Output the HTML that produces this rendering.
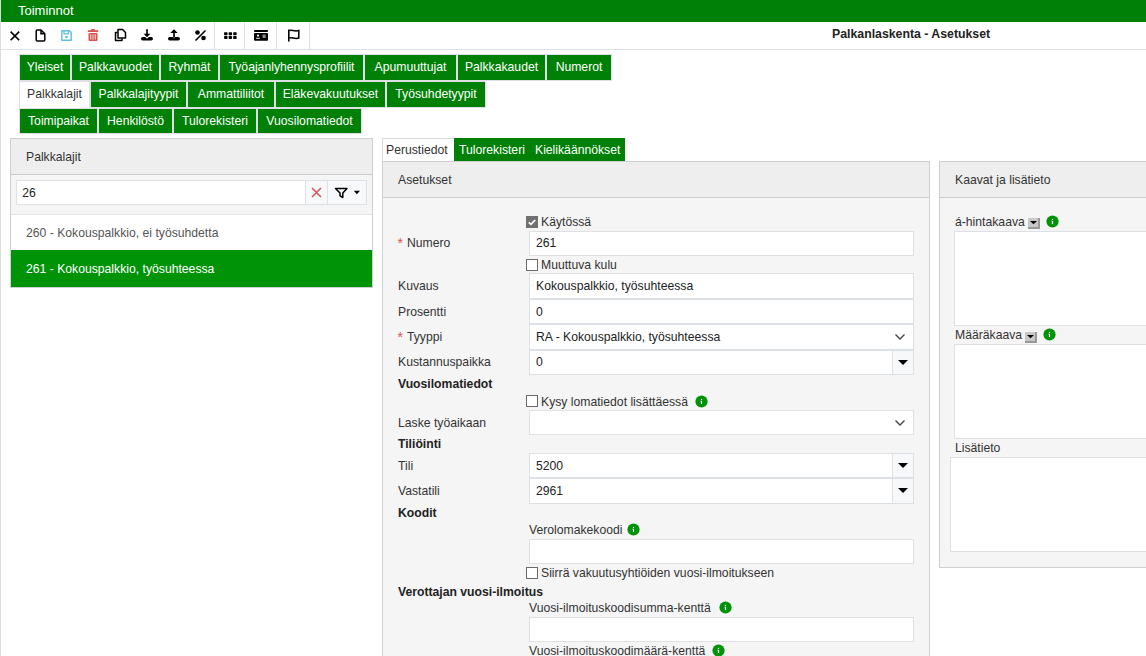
<!DOCTYPE html>
<html><head><meta charset="utf-8"><style>
html,body{margin:0;padding:0;}
body{width:1146px;height:656px;overflow:hidden;position:relative;background:#fff;font-family:"Liberation Sans",sans-serif;}
body>div{position:absolute;box-sizing:content-box;}
.t{position:absolute;line-height:1;white-space:nowrap;}
</style></head><body>
<div style="left:0px;top:0px;width:1px;height:656px;background:#dcdcdc"></div>
<div style="left:1px;top:0px;width:1145px;height:22px;background:#008006"></div>
<div class="t" style="left:18px;top:4.00px;font-size:13px;color:#fff;">Toiminnot</div>
<div style="left:1px;top:49px;width:1145px;height:1px;background:#dde0e4"></div>
<div style="left:214px;top:22px;width:1px;height:27px;background:#dde0e4"></div>
<div style="left:244px;top:22px;width:1px;height:27px;background:#dde0e4"></div>
<div style="left:276px;top:22px;width:1px;height:27px;background:#dde0e4"></div>
<div style="left:309px;top:22px;width:1px;height:27px;background:#dde0e4"></div>
<div class="t" style="left:832px;top:28.09px;font-size:12.3px;color:#222;font-weight:700;">Palkanlaskenta - Asetukset</div>
<svg style="position:absolute;left:9px;top:30px" width="12" height="12" viewBox="0 0 12 12"><path d="M1.6 1.6 L10.2 10.2 M10.2 1.6 L1.6 10.2" stroke="#000" stroke-width="1.6" fill="none"/></svg>
<svg style="position:absolute;left:35px;top:29px" width="11" height="13" viewBox="0 0 11 13"><path d="M1.2 2 Q1.2 1 2.2 1 H6 L9.8 4.8 V11 Q9.8 12 8.8 12 H2.2 Q1.2 12 1.2 11 Z" stroke="#000" stroke-width="1.5" fill="none" stroke-linejoin="round"/><path d="M6 1.2 V4.8 H9.6" stroke="#000" stroke-width="1.5" fill="none"/></svg>
<svg style="position:absolute;left:60px;top:29px" width="13" height="13" viewBox="0 0 13 13"><path d="M1.8 1.8 H9.5 L11.2 3.5 V11.2 H1.8 Z" stroke="#5bc0de" stroke-width="1.4" fill="none" stroke-linejoin="round"/><path d="M4 2 V4.8 H8.5 V2" stroke="#5bc0de" stroke-width="1.2" fill="none"/><circle cx="6.5" cy="8" r="1.3" fill="#5bc0de"/></svg>
<svg style="position:absolute;left:87px;top:28px" width="12" height="14" viewBox="0 0 12 14"><rect x="0.8" y="2.2" width="10.4" height="1.8" rx="0.5" fill="#d9534f"/><rect x="4.2" y="1" width="3.6" height="2" rx="0.5" fill="#d9534f"/><rect x="1.5" y="5" width="9" height="8" rx="1" fill="#d9534f"/><rect x="3.4" y="6.3" width="0.8" height="5.3" fill="#fff"/><rect x="5.6" y="6.3" width="0.8" height="5.3" fill="#fff"/><rect x="7.8" y="6.3" width="0.8" height="5.3" fill="#fff"/></svg>
<svg style="position:absolute;left:113px;top:28px" width="14" height="14" viewBox="0 0 14 14"><path d="M4.5 4.5 H2.5 V12.5 H9 V10.5" stroke="#000" stroke-width="1.5" fill="none" stroke-linejoin="round"/><path d="M5 1.5 H9.5 L12.5 4.5 V10 H5 Z" stroke="#000" stroke-width="1.5" fill="none" stroke-linejoin="round"/></svg>
<svg style="position:absolute;left:140px;top:28px" width="14" height="14" viewBox="0 0 14 14"><path d="M7 1.3 V7" stroke="#000" stroke-width="1.7"/><path d="M3.6 5.8 L7 9.2 L10.4 5.8 Z" fill="#000"/><path d="M2.8 9 H5.2 L7 10.8 L8.8 9 H11.2 A1.8 1.8 0 0 1 11.2 12.6 H2.8 A1.8 1.8 0 0 1 2.8 9 Z" fill="#000"/></svg>
<svg style="position:absolute;left:167px;top:28px" width="14" height="14" viewBox="0 0 14 14"><path d="M7 4 V9.8" stroke="#000" stroke-width="1.7"/><path d="M3.3 5 L7 1.2 L10.7 5 Z" fill="#000"/><path d="M2.8 9 H5.6 L7 10.4 L8.4 9 H11.2 A1.8 1.8 0 0 1 11.2 12.6 H2.8 A1.8 1.8 0 0 1 2.8 9 Z" fill="#000"/></svg>
<svg style="position:absolute;left:194px;top:29px" width="14" height="13" viewBox="0 0 14 13"><circle cx="3.5" cy="3.5" r="2.3" fill="#000"/><circle cx="9.5" cy="9" r="2.3" fill="#000"/><path d="M1.5 11.5 L11.5 1.5" stroke="#000" stroke-width="1.6"/></svg>
<svg style="position:absolute;left:224px;top:32px" width="14" height="8" viewBox="0 0 14 8"><rect x="0.10" y="0.20" width="3.4" height="3.0" rx="0.6" fill="#000"/><rect x="0.10" y="3.95" width="3.4" height="3.0" rx="0.6" fill="#000"/><rect x="4.65" y="0.20" width="3.4" height="3.0" rx="0.6" fill="#000"/><rect x="4.65" y="3.95" width="3.4" height="3.0" rx="0.6" fill="#000"/><rect x="9.20" y="0.20" width="3.4" height="3.0" rx="0.6" fill="#000"/><rect x="9.20" y="3.95" width="3.4" height="3.0" rx="0.6" fill="#000"/></svg>
<svg style="position:absolute;left:253px;top:29px" width="16" height="13" viewBox="0 0 16 13"><rect x="1" y="1" width="14" height="2" rx="0.8" fill="#000"/><rect x="1" y="4" width="14" height="7.8" rx="1" fill="#000"/><circle cx="5" cy="6.6" r="1.1" fill="#fff"/><rect x="3" y="8.8" width="4" height="0.9" fill="#fff"/><rect x="9.5" y="5.5" width="3.2" height="3.5" fill="#888"/></svg>
<svg style="position:absolute;left:287px;top:28px" width="14" height="14" viewBox="0 0 14 14"><path d="M1.8 1.5 V13.5" stroke="#000" stroke-width="1.6"/><path d="M2.5 2.5 C5 1 7 4 11.8 2.5 V10 C7 11.5 5 8.5 2.5 10" stroke="#000" stroke-width="1.5" fill="none"/></svg>
<div style="left:19px;top:54px;width:50px;height:25px;border:1px solid #dfe0e6;background:#008006"></div>
<div class="t" style="left:20px;top:61.47px;width:50px;text-align:center;font-size:12.2px;color:#fff;">Yleiset</div>
<div style="left:71px;top:54px;width:87px;height:25px;border:1px solid #dfe0e6;background:#008006"></div>
<div class="t" style="left:72px;top:61.47px;width:87px;text-align:center;font-size:12.2px;color:#fff;">Palkkavuodet</div>
<div style="left:160px;top:54px;width:57px;height:25px;border:1px solid #dfe0e6;background:#008006"></div>
<div class="t" style="left:161px;top:61.47px;width:57px;text-align:center;font-size:12.2px;color:#fff;">Ryhmät</div>
<div style="left:219px;top:54px;width:143px;height:25px;border:1px solid #dfe0e6;background:#008006"></div>
<div class="t" style="left:220px;top:61.47px;width:143px;text-align:center;font-size:12.2px;color:#fff;">Työajanlyhennysprofiilit</div>
<div style="left:364px;top:54px;width:91px;height:25px;border:1px solid #dfe0e6;background:#008006"></div>
<div class="t" style="left:365px;top:61.47px;width:91px;text-align:center;font-size:12.2px;color:#fff;">Apumuuttujat</div>
<div style="left:457px;top:54px;width:87px;height:25px;border:1px solid #dfe0e6;background:#008006"></div>
<div class="t" style="left:458px;top:61.47px;width:87px;text-align:center;font-size:12.2px;color:#fff;">Palkkakaudet</div>
<div style="left:546px;top:54px;width:64px;height:25px;border:1px solid #dfe0e6;background:#008006"></div>
<div class="t" style="left:547px;top:61.47px;width:64px;text-align:center;font-size:12.2px;color:#fff;">Numerot</div>
<div style="left:19px;top:81px;width:69px;height:25px;border:1px solid #dfe0e6;border-bottom-color:#fff;background:#fff"></div>
<div class="t" style="left:20px;top:88.47px;width:69px;text-align:center;font-size:12.2px;color:#333;">Palkkalajit</div>
<div style="left:90px;top:81px;width:95px;height:25px;border:1px solid #dfe0e6;background:#008006"></div>
<div class="t" style="left:91px;top:88.47px;width:95px;text-align:center;font-size:12.2px;color:#fff;">Palkkalajityypit</div>
<div style="left:187px;top:81px;width:86px;height:25px;border:1px solid #dfe0e6;background:#008006"></div>
<div class="t" style="left:188px;top:88.47px;width:86px;text-align:center;font-size:12.2px;color:#fff;">Ammattiliitot</div>
<div style="left:275px;top:81px;width:109px;height:25px;border:1px solid #dfe0e6;background:#008006"></div>
<div class="t" style="left:276px;top:88.47px;width:109px;text-align:center;font-size:12.2px;color:#fff;">Eläkevakuutukset</div>
<div style="left:386px;top:81px;width:98px;height:25px;border:1px solid #dfe0e6;background:#008006"></div>
<div class="t" style="left:387px;top:88.47px;width:98px;text-align:center;font-size:12.2px;color:#fff;">Työsuhdetyypit</div>
<div style="left:19px;top:108px;width:77px;height:24px;border:1px solid #dfe0e6;background:#008006"></div>
<div class="t" style="left:20px;top:115.47px;width:77px;text-align:center;font-size:12.2px;color:#fff;">Toimipaikat</div>
<div style="left:98px;top:108px;width:73px;height:24px;border:1px solid #dfe0e6;background:#008006"></div>
<div class="t" style="left:99px;top:115.47px;width:73px;text-align:center;font-size:12.2px;color:#fff;">Henkilöstö</div>
<div style="left:173px;top:108px;width:82px;height:24px;border:1px solid #dfe0e6;background:#008006"></div>
<div class="t" style="left:174px;top:115.47px;width:82px;text-align:center;font-size:12.2px;color:#fff;">Tulorekisteri</div>
<div style="left:257px;top:108px;width:103px;height:24px;border:1px solid #dfe0e6;background:#008006"></div>
<div class="t" style="left:258px;top:115.47px;width:103px;text-align:center;font-size:12.2px;color:#fff;">Vuosilomatiedot</div>
<div style="left:10px;top:138px;width:361px;height:148px;border:1px solid #cfcfcf;background:#fff"></div>
<div style="left:11px;top:139px;width:361px;height:35px;background:#eeeeee"></div>
<div style="left:11px;top:174px;width:361px;height:1px;background:#cccccc"></div>
<div class="t" style="left:26px;top:150.67px;font-size:12.2px;color:#333;">Palkkalajit</div>
<div style="left:11px;top:175px;width:361px;height:39px;background:#f5f5f5"></div>
<div style="left:11px;top:214px;width:361px;height:1px;background:#e2e4e8"></div>
<div style="left:16px;top:180px;width:288px;height:23px;border:1px solid #dde1e6;background:#fff"></div>
<div class="t" style="left:22.3px;top:186.67px;font-size:12.2px;color:#222;">26</div>
<div style="left:305px;top:180px;width:21px;height:23px;border:1px solid #dde1e6;background:#f7f8fa"></div>
<div style="left:327px;top:180px;width:38px;height:23px;border:1px solid #dde1e6;background:#f7f8fa"></div>
<svg style="position:absolute;left:311px;top:187px" width="11" height="11" viewBox="0 0 11 11"><path d="M1 1 L10 10 M10 1 L1 10" stroke="#d9534f" stroke-width="1.5"/></svg>
<svg style="position:absolute;left:334px;top:187px" width="15" height="12" viewBox="0 0 15 12"><path d="M1.5 1.5 H13 L8.8 6 V10.5 L6 8.8 V6 Z" stroke="#000" stroke-width="1.5" fill="none" stroke-linejoin="round"/></svg>
<svg style="position:absolute;left:353px;top:190px" width="8" height="5" viewBox="0 0 8 5"><path d="M0.8 0.8 H7 L3.9 4.2 Z" fill="#000"/></svg>
<div class="t" style="left:26px;top:226.67px;font-size:12.2px;color:#555;">260 - Kokouspalkkio, ei työsuhdetta</div>
<div style="left:11px;top:250px;width:361px;height:37px;background:#009308"></div>
<div class="t" style="left:26px;top:262.67px;font-size:12.2px;color:#fff;">261 - Kokouspalkkio, työsuhteessa</div>
<div style="left:382px;top:138px;width:71px;height:22px;border:1px solid #dadada;border-bottom:none;background:#fff"></div>
<div class="t" style="left:386px;top:143.67px;font-size:12.2px;color:#333;">Perustiedot</div>
<div style="left:454px;top:138px;width:171px;height:23px;background:#008006"></div>
<div class="t" style="left:459px;top:143.67px;font-size:12.2px;color:#fff;">Tulorekisteri</div>
<div class="t" style="left:535px;top:143.67px;font-size:12.2px;color:#fff;">Kielikäännökset</div>
<div style="left:382px;top:161px;width:546px;height:500px;border:1px solid #cfcfcf;background:#f5f5f5"></div>
<div style="left:383px;top:162px;width:546px;height:35px;background:#eeeeee"></div>
<div style="left:383px;top:197px;width:546px;height:1px;background:#cccccc"></div>
<div class="t" style="left:398px;top:173.67px;font-size:12.2px;color:#333;">Asetukset</div>
<div style="left:939px;top:161px;width:220px;height:405px;border:1px solid #cfcfcf;background:#f5f5f5"></div>
<div style="left:940px;top:162px;width:210px;height:35px;background:#eeeeee"></div>
<div style="left:940px;top:197px;width:210px;height:1px;background:#cccccc"></div>
<div class="t" style="left:955px;top:173.67px;font-size:12.2px;color:#333;">Kaavat ja lisätieto</div>
<div style="left:526px;top:216px;width:12px;height:12px;background:#707070"></div>
<svg style="position:absolute;left:526px;top:216px" width="12" height="12" viewBox="0 0 12 12"><path d="M2.8 6.3 L5 8.3 L9.2 4" stroke="#fff" stroke-width="1.7" fill="none"/></svg>
<div class="t" style="left:541px;top:215.67px;font-size:12.2px;color:#333;">Käytössä</div>
<div class="t" style="left:397.5px;top:235.7px;font-size:14px;color:#d9534f">*</div>
<div class="t" style="left:407px;top:236.67px;font-size:12.2px;color:#333;">Numero</div>
<div style="left:529px;top:231px;width:383px;height:23px;border:1px solid #dde1e6;background:#fff"></div>
<div class="t" style="left:536px;top:236.67px;font-size:12.2px;color:#222;">261</div>
<div style="left:526px;top:259px;width:10px;height:10px;border:1px solid #6a6a6a;background:#fff"></div>
<div class="t" style="left:541px;top:258.67px;font-size:12.2px;color:#333;">Muuttuva kulu</div>
<div class="t" style="left:398px;top:279.67px;font-size:12.2px;color:#333;">Kuvaus</div>
<div style="left:529px;top:273px;width:383px;height:24px;border:1px solid #dde1e6;background:#fff"></div>
<div class="t" style="left:536px;top:279.67px;font-size:12.2px;color:#222;">Kokouspalkkio, työsuhteessa</div>
<div class="t" style="left:398px;top:305.67px;font-size:12.2px;color:#333;">Prosentti</div>
<div style="left:529px;top:299px;width:383px;height:23px;border:1px solid #dde1e6;background:#fff"></div>
<div class="t" style="left:536px;top:305.67px;font-size:12.2px;color:#222;">0</div>
<div class="t" style="left:397.5px;top:329.7px;font-size:14px;color:#d9534f">*</div>
<div class="t" style="left:407px;top:330.67px;font-size:12.2px;color:#333;">Tyyppi</div>
<div style="left:529px;top:324px;width:383px;height:24px;border:1px solid #dde1e6;background:#fff"></div>
<div class="t" style="left:536px;top:330.67px;font-size:12.2px;color:#222;">RA - Kokouspalkkio, työsuhteessa</div>
<svg style="position:absolute;left:894px;top:333px" width="12" height="8" viewBox="0 0 12 8"><path d="M1.5 1.5 L6 6 L10.5 1.5" stroke="#444" stroke-width="1.4" fill="none"/></svg>
<div class="t" style="left:398px;top:355.67px;font-size:12.2px;color:#333;">Kustannuspaikka</div>
<div style="left:529px;top:350px;width:383px;height:23px;border:1px solid #dde1e6;background:#fff"></div>
<div class="t" style="left:536px;top:356.17px;font-size:12.2px;color:#222;">0</div>
<div style="left:892px;top:350px;width:20px;height:23px;border:1px solid #dde1e6;background:#f7f8fa"></div>
<svg style="position:absolute;left:897px;top:359px" width="12" height="7" viewBox="0 0 12 7"><path d="M1 1 H11 L6 6 Z" fill="#000"/></svg>
<div class="t" style="left:398px;top:378.17px;font-size:12.2px;color:#222;font-weight:700;">Vuosilomatiedot</div>
<div style="left:526px;top:395px;width:10px;height:10px;border:1px solid #6a6a6a;background:#fff"></div>
<div class="t" style="left:541px;top:395.67px;font-size:12.2px;color:#333;">Kysy lomatiedot lisättäessä</div>
<svg style="position:absolute;left:695.0px;top:395.0px" width="13" height="13" viewBox="0 0 13 13"><circle cx="6.5" cy="6.5" r="6.1" fill="#009308"/><rect x="5.9" y="3.9" width="1.2" height="1.1" fill="#fff"/><path d="M5.5 5.7 H7.1 V8.9 H5.9 V6.4 H5.5 Z" fill="#fff"/></svg>
<div class="t" style="left:398px;top:416.67px;font-size:12.2px;color:#333;">Laske työaikaan</div>
<div style="left:529px;top:410px;width:383px;height:23px;border:1px solid #dde1e6;background:#fff"></div>
<svg style="position:absolute;left:894px;top:419px" width="12" height="8" viewBox="0 0 12 8"><path d="M1.5 1.5 L6 6 L10.5 1.5" stroke="#444" stroke-width="1.4" fill="none"/></svg>
<div class="t" style="left:398px;top:437.67px;font-size:12.2px;color:#222;font-weight:700;">Tiliöinti</div>
<div class="t" style="left:398px;top:459.67px;font-size:12.2px;color:#333;">Tili</div>
<div style="left:529px;top:453px;width:383px;height:23px;border:1px solid #dde1e6;background:#fff"></div>
<div class="t" style="left:536px;top:459.67px;font-size:12.2px;color:#222;">5200</div>
<div style="left:892px;top:453px;width:20px;height:23px;border:1px solid #dde1e6;background:#f7f8fa"></div>
<svg style="position:absolute;left:897px;top:462px" width="12" height="7" viewBox="0 0 12 7"><path d="M1 1 H11 L6 6 Z" fill="#000"/></svg>
<div class="t" style="left:398px;top:484.67px;font-size:12.2px;color:#333;">Vastatili</div>
<div style="left:529px;top:478px;width:383px;height:24px;border:1px solid #dde1e6;background:#fff"></div>
<div class="t" style="left:536px;top:484.67px;font-size:12.2px;color:#222;">2961</div>
<div style="left:892px;top:478px;width:20px;height:24px;border:1px solid #dde1e6;background:#f7f8fa"></div>
<svg style="position:absolute;left:897px;top:487px" width="12" height="7" viewBox="0 0 12 7"><path d="M1 1 H11 L6 6 Z" fill="#000"/></svg>
<div class="t" style="left:398px;top:506.67px;font-size:12.2px;color:#222;font-weight:700;">Koodit</div>
<div class="t" style="left:529px;top:523.97px;font-size:12.2px;color:#333;">Verolomakekoodi</div>
<svg style="position:absolute;left:627.3px;top:522.7px" width="13" height="13" viewBox="0 0 13 13"><circle cx="6.5" cy="6.5" r="6.1" fill="#009308"/><rect x="5.9" y="3.9" width="1.2" height="1.1" fill="#fff"/><path d="M5.5 5.7 H7.1 V8.9 H5.9 V6.4 H5.5 Z" fill="#fff"/></svg>
<div style="left:529px;top:539px;width:383px;height:23px;border:1px solid #dde1e6;background:#fff"></div>
<div style="left:526px;top:567px;width:10px;height:10px;border:1px solid #6a6a6a;background:#fff"></div>
<div class="t" style="left:541px;top:566.67px;font-size:12.2px;color:#333;">Siirrä vakuutusyhtiöiden vuosi-ilmoitukseen</div>
<div class="t" style="left:398px;top:585.67px;font-size:12.2px;color:#222;font-weight:700;">Verottajan vuosi-ilmoitus</div>
<div class="t" style="left:529px;top:601.67px;font-size:12.2px;color:#333;">Vuosi-ilmoituskoodisumma-kenttä</div>
<svg style="position:absolute;left:718.5px;top:601.0px" width="13" height="13" viewBox="0 0 13 13"><circle cx="6.5" cy="6.5" r="6.1" fill="#009308"/><rect x="5.9" y="3.9" width="1.2" height="1.1" fill="#fff"/><path d="M5.5 5.7 H7.1 V8.9 H5.9 V6.4 H5.5 Z" fill="#fff"/></svg>
<div style="left:529px;top:617px;width:383px;height:23px;border:1px solid #dde1e6;background:#fff"></div>
<div class="t" style="left:529px;top:644.67px;font-size:12.2px;color:#333;">Vuosi-ilmoituskoodimäärä-kenttä</div>
<svg style="position:absolute;left:711.5px;top:644.0px" width="13" height="13" viewBox="0 0 13 13"><circle cx="6.5" cy="6.5" r="6.1" fill="#009308"/><rect x="5.9" y="3.9" width="1.2" height="1.1" fill="#fff"/><path d="M5.5 5.7 H7.1 V8.9 H5.9 V6.4 H5.5 Z" fill="#fff"/></svg>
<div class="t" style="left:955px;top:216.17px;font-size:12.2px;color:#333;">á-hintakaava</div>
<div style="left:1028px;top:218px;width:10px;height:9px;background:#c8c8c8;border-right:2px solid #999;border-bottom:2px solid #999"></div>
<svg style="position:absolute;left:1030px;top:221px" width="7" height="4" viewBox="0 0 7 4"><path d="M0 0 H7 L3.5 3.2 Z" fill="#000"/></svg>
<svg style="position:absolute;left:1046.0px;top:215.0px" width="13" height="13" viewBox="0 0 13 13"><circle cx="6.5" cy="6.5" r="6.1" fill="#009308"/><rect x="5.9" y="3.9" width="1.2" height="1.1" fill="#fff"/><path d="M5.5 5.7 H7.1 V8.9 H5.9 V6.4 H5.5 Z" fill="#fff"/></svg>
<div style="left:954px;top:231px;width:200px;height:93px;border:1px solid #dde1e6;background:#fff"></div>
<div class="t" style="left:955px;top:328.67px;font-size:12.2px;color:#333;">Määräkaava</div>
<div style="left:1025px;top:332px;width:10px;height:9px;background:#c8c8c8;border-right:2px solid #999;border-bottom:2px solid #999"></div>
<svg style="position:absolute;left:1027px;top:335px" width="7" height="4" viewBox="0 0 7 4"><path d="M0 0 H7 L3.5 3.2 Z" fill="#000"/></svg>
<svg style="position:absolute;left:1042.5px;top:328.0px" width="13" height="13" viewBox="0 0 13 13"><circle cx="6.5" cy="6.5" r="6.1" fill="#009308"/><rect x="5.9" y="3.9" width="1.2" height="1.1" fill="#fff"/><path d="M5.5 5.7 H7.1 V8.9 H5.9 V6.4 H5.5 Z" fill="#fff"/></svg>
<div style="left:954px;top:344px;width:200px;height:93px;border:1px solid #dde1e6;background:#fff"></div>
<div class="t" style="left:955px;top:441.67px;font-size:12.2px;color:#333;">Lisätieto</div>
<div style="left:950px;top:457px;width:200px;height:93px;border:1px solid #dde1e6;background:#fff"></div>
</body></html>
